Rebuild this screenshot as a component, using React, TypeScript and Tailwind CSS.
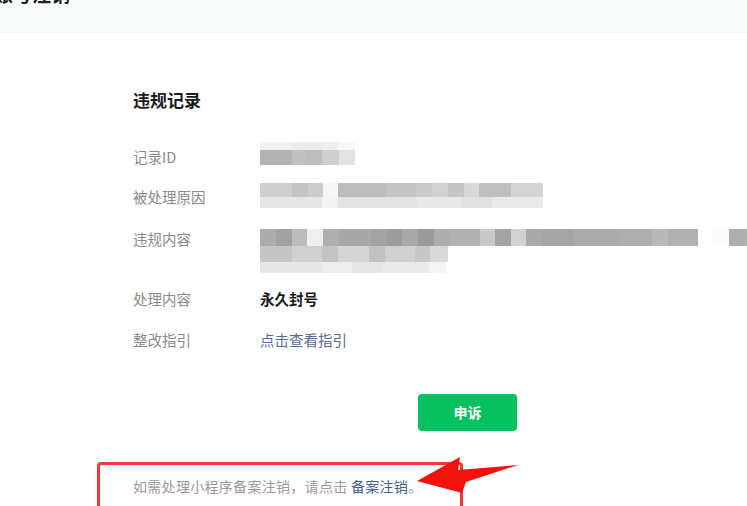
import React from 'react';

// blurred (mosaic) strips in the value column: [width, colour]
type Cell = [number, string];

const idTop: Cell[] = [[32, '#f1f1f1'], [30, '#ececec'], [16, '#eeeeee'], [17, '#f7f7f7']];
const idMain: Cell[] = [[32, '#b3b3b3'], [14, '#c2c0bf'], [16, '#bdbdbd'], [17, '#cfcfcf'], [16, '#e3e3e3']];

const reasonMain: Cell[] = [
  [32, '#cfcfcf'], [16, '#c4c4c4'], [15, '#cdcdcd'], [15, '#f7f7f7'], [48, '#bdbdbd'], [30, '#c4c4c4'],
  [16, '#cbcbcb'], [16, '#d2d2d2'], [16, '#c6c6c6'], [15, '#d9d9d9'], [32, '#bfbfbf'], [32, '#d4d4d4'],
];
const reasonSub: Cell[] = [[62, '#e6e6e6'], [16, '#f3f3f3'], [79, '#e4e4e4'], [45, '#e9e9e9'], [30, '#e2e2e2'], [51, '#ebebeb']];

const contentMain: Cell[] = [
  [16, '#acacac'], [16, '#a1a1a1'], [15, '#bcbcbc'], [16, '#f0f0f0'], [16, '#afafaf'], [32, '#a8a8a8'],
  [16, '#a3a3a3'], [15, '#9d9d9d'], [16, '#a9a9a9'], [16, '#9a9a9a'], [16, '#adadad'], [30, '#b1b1b1'],
  [15, '#c9c9c9'], [16, '#a4a4a4'], [15, '#d2d2d2'], [16, '#aaaaaa'], [32, '#a5a5a5'], [46, '#ababab'],
  [32, '#aeaeae'], [16, '#b8b8bd'], [30, '#b1b1b1'], [15, '#ffffff'], [16, '#fcfcfc'], [16, '#aeaeae'], [20, '#b0b0b0'],
];
const contentSub: Cell[] = [[32, '#c6c6c6'], [30, '#d0d0d0'], [16, '#c4c4c4'], [31, '#d6d6d6'], [16, '#c2c2c2'], [30, '#d1d1d1'], [15, '#c8c8c8'], [18, '#dadada']];
const contentLow: Cell[] = [[62, '#e7e7e7'], [30, '#eeeeee'], [31, '#e6e6e6'], [46, '#ebebeb'], [17, '#f3f4f6']];

function Strip({ cells, h }: { cells: Cell[]; h: string }) {
  return (
    <div className={`flex ${h}`}>
      {cells.map(([w, c], i) => (
        <div key={i} className="h-full shrink-0" style={{ width: w, background: c }} />
      ))}
    </div>
  );
}

function Arrow() {
  return (
    <svg className="absolute left-[410px] top-[450px]" width="120" height="50" viewBox="0 0 120 50">
      <polygon points="7,31 50,7 48,20 108,15 56,32 52,43" fill="#f2120c" />
    </svg>
  );
}

export default function App() {
  return (
    <div className="relative h-[506px] w-[747px] overflow-hidden bg-white font-['Noto_Sans_CJK_SC','Noto_Sans',sans-serif]">
      <div className="h-[33px] overflow-hidden border-b border-[#f3f5f5] bg-[#fbfcfc]">
        <div className="-ml-[6px] -mt-[19px] text-[19px] font-bold leading-[26px] text-[#222]">账号注销</div>
      </div>

      <div className="pl-[133px] pt-[55px]">
        <h2 className="text-[17px] font-bold leading-6 text-[#1a1a1a]">违规记录</h2>

        <div className="mt-[35px] flex text-[14.5px] leading-5">
          <div className="w-[127px] shrink-0 text-[#8a8a8a]">记录ID</div>
          <div className="-mt-[5px]">
            <Strip cells={idTop} h="h-[8px]" />
            <Strip cells={idMain} h="h-[15px]" />
          </div>
        </div>

        <div className="mt-[20px] flex text-[14.5px] leading-5">
          <div className="w-[127px] shrink-0 text-[#8a8a8a]">被处理原因</div>
          <div className="-mt-[4px]">
            <Strip cells={reasonMain} h="h-[14px]" />
            <Strip cells={reasonSub} h="h-[11px]" />
          </div>
        </div>

        <div className="mt-[21px] flex text-[14.5px] leading-5">
          <div className="w-[127px] shrink-0 text-[#8a8a8a]">违规内容</div>
          <div>
            <Strip cells={contentMain} h="h-[17px]" />
            <Strip cells={contentSub} h="h-[16px]" />
            <Strip cells={contentLow} h="h-[11px]" />
          </div>
        </div>

        <div className="mt-[16px] flex text-[14.5px] leading-5">
          <div className="w-[127px] shrink-0 text-[#8a8a8a]">处理内容</div>
          <div className="font-bold text-[#1a1a1a]">永久封号</div>
        </div>

        <div className="mt-[21px] flex text-[14.5px] leading-5">
          <div className="w-[127px] shrink-0 text-[#8a8a8a]">整改指引</div>
          <a className="text-[#576b95]">点击查看指引</a>
        </div>

        <button className="ml-[285px] mt-[44px] flex h-[37px] w-[99px] items-center justify-center rounded-[4px] bg-[#07c160] text-[14px] font-bold text-white">
          申诉
        </button>
      </div>

      <div className="ml-[97px] mt-[31px] h-[60px] w-[366px] rounded-[4px] border-[3px] border-[#ea3c35] pl-[33px] pt-[11px] text-[14px] leading-5 tracking-[0.3px] text-[#9a9a9a]">
        如需处理小程序备案注销，请点击 <span className="text-[#45608f]">备案注销</span>。
      </div>

      <Arrow />
    </div>
  );
}
